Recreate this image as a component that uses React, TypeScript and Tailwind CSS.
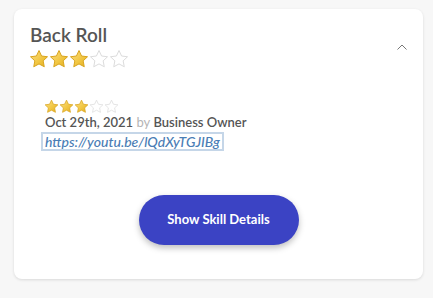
import React from "react";

function Star({ filled, size }: { filled: boolean; size: number }) {
  return (
    <svg width={size} height={size} viewBox="0 0 24 24">
      <defs>
        <linearGradient id="gold" x1="0" y1="0" x2="1" y2="1">
          <stop offset="0%" stopColor="#fbe28a" />
          <stop offset="55%" stopColor="#f2c744" />
          <stop offset="100%" stopColor="#e0ad1f" />
        </linearGradient>
      </defs>
      <path
        d="M12 1.8l3.1 6.6 7.1.9-5.2 4.9 1.3 7.1L12 17.9l-6.3 3.4 1.3-7.1L1.8 9.3l7.1-.9z"
        fill={filled ? "url(#gold)" : "#ffffff"}
        stroke={filled ? "#d9a520" : "#dcdcdc"}
        strokeWidth="1.2"
        strokeLinejoin="round"
      />
    </svg>
  );
}

function Stars({ value, size }: { value: number; size: number }) {
  return (
    <div className="flex">
      {[0, 1, 2, 3, 4].map((i) => (
        <Star key={i} filled={i < value} size={size} />
      ))}
    </div>
  );
}

export default function App() {
  return (
    <main className="min-h-screen w-full bg-[#f7f7f7] px-[14px] pt-[9px] pb-[19px] font-['Lato',sans-serif]">
      <div className="h-[270px] w-[409px] rounded-lg bg-white shadow-[0_1px_3px_rgba(0,0,0,0.12)] flex flex-col">
        {/* header */}
        <div className="flex items-start justify-between pl-4 pr-[15px] pt-[14px]">
          <div className="flex flex-col">
            <h1 className="text-[19px] leading-[24px] font-semibold text-[#555555]">Back Roll</h1>
            <div className="-ml-[1px] mt-[2px]">
              <Stars value={3} size={20} />
            </div>
          </div>
          <svg width="12" height="8" viewBox="0 0 12 8" className="mt-[20px]">
            <path d="M1.5 6.5L6 2l4.5 4.5" fill="none" stroke="#777" strokeWidth="1" />
          </svg>
        </div>

        {/* review */}
        <div className="flex flex-col items-start pl-[27px] pt-[30px]">
          <div className="ml-[3px]">
            <Stars value={3} size={15} />
          </div>
          <p className="ml-[4px] text-[13px] leading-[17px] font-semibold text-[#555555]">
            Oct 29th, 2021 <span className="font-normal text-[#b5b5b5]">by</span> Business Owner
          </p>
          <a className="mt-[1px] border-2 border-[#c5d6e8] px-[2px] text-[14px] leading-[15px] italic font-medium text-[#4a7db5]">
            https://youtu.be/lQdXyTGJIBg
          </a>
        </div>

        {/* button */}
        <div className="flex justify-center pt-[44px]">
          <button className="h-[50px] w-[160px] rounded-full bg-[#3b43c4] text-[13px] font-bold text-white shadow-[0_3px_6px_rgba(0,0,0,0.25)]">
            Show Skill Details
          </button>
        </div>
      </div>
    </main>
  );
}
